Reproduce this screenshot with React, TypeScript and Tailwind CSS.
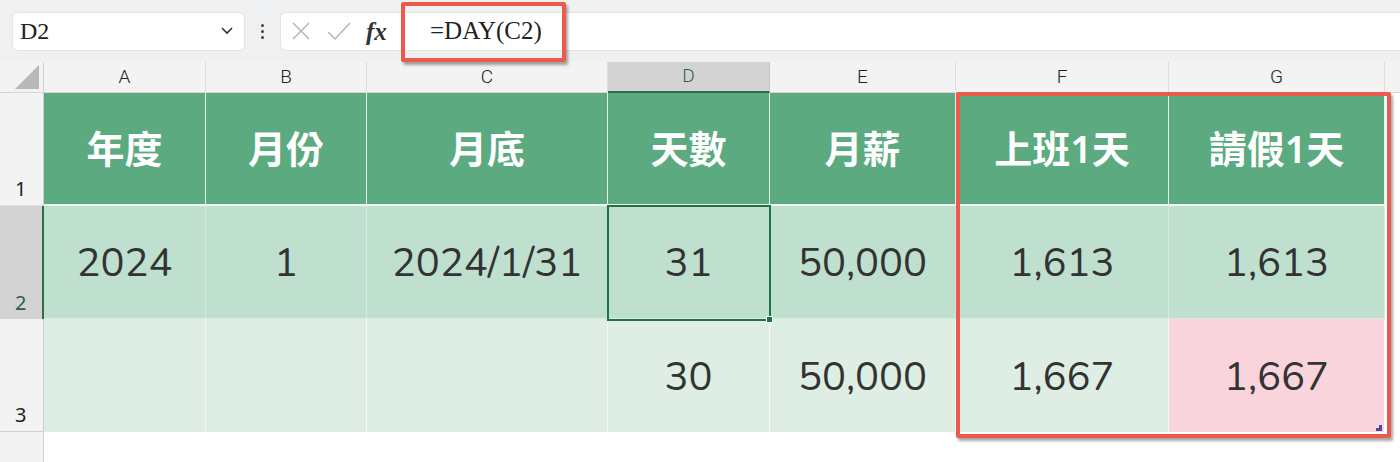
import React from "react";

const cols = [
  { k: "A", w: 162 },
  { k: "B", w: 161 },
  { k: "C", w: 241 },
  { k: "D", w: 162 },
  { k: "E", w: 186 },
  { k: "F", w: 213 },
  { k: "G", w: 216 },
];

const headers = ["年度", "月份", "月底", "天數", "月薪", "上班1天", "請假1天"];
const row2 = ["2024", "1", "2024/1/31", "31", "50,000", "1,613", "1,613"];
const row3 = ["", "", "", "30", "50,000", "1,667", "1,667"];

const numFont = { fontFamily: '"Nunito","Noto Sans","Open Sans",sans-serif' };

export default function App() {
  return (
    <div className="relative w-[1400px] h-[462px] overflow-hidden bg-white" style={{ fontFamily: '"Noto Sans","Noto Sans CJK TC",sans-serif' }}>
      {/* top bar */}
      <div className="h-[62px] bg-[#eef0f2] flex items-center pl-[12px]">
        <div className="w-[233px] h-[39px] bg-white rounded-[6px] flex items-center justify-between pl-[7px] pr-[10px] border border-[#e2e4e6]">
          <span className="text-[24px] text-[#222]" style={{ fontFamily: '"Liberation Serif",serif' }}>D2</span>
          <svg width="14" height="10" viewBox="0 0 14 10"><path d="M2 2 L7 7 L12 2" fill="none" stroke="#333" strokeWidth="1.6" /></svg>
        </div>
        <div className="w-[35px] flex flex-col items-center justify-center gap-[3px]">
          <span className="w-[3px] h-[3px] bg-[#444] rounded-full" />
          <span className="w-[3px] h-[3px] bg-[#444] rounded-full" />
          <span className="w-[3px] h-[3px] bg-[#444] rounded-full" />
        </div>
        <div className="flex-1 h-[39px] bg-white rounded-l-[6px] border border-[#e2e4e6] border-r-0 flex items-center">
          <div className="w-[120px] flex items-center pl-[9px] gap-[14px]">
            <svg width="22" height="22" viewBox="0 0 22 22"><path d="M3 3 L19 19 M19 3 L3 19" stroke="#b5b5b5" strokeWidth="1.5" /></svg>
            <svg width="26" height="22" viewBox="0 0 26 22"><path d="M2 12 L9 19 L24 3" fill="none" stroke="#b5b5b5" strokeWidth="1.5" /></svg>
            <span className="text-[25px] italic font-bold text-[#333] leading-none" style={{ fontFamily: '"Liberation Serif",serif' }}>fx</span>
          </div>
          <div className="pl-[29px] text-[25px] text-[#222]" style={{ fontFamily: '"Liberation Serif",serif' }}>=DAY(C2)</div>
        </div>
      </div>

      {/* column header row */}
      <div className="flex h-[31px] bg-[#f3f3f3]">
        <div className="w-[44px] h-full border-r border-[#cfcfcf] border-b border-b-[#d6d6d6] relative flex items-end justify-end pr-[4px] pb-[3px]">
          <svg width="24" height="24" viewBox="0 0 24 24"><path d="M24 0 L24 24 L0 24 Z" fill="#b8b8b8" /></svg>
        </div>
        {cols.map((c) => (
          <div
            key={c.k}
            style={{ width: c.w }}
            className={
              c.k === "D"
                ? "h-full flex items-center justify-center bg-[#d3d3d3] border-b-2 border-[#2e6b48] border-r border-r-[#c8c8c8] text-[19px] text-[#2e5e45]"
                : "h-full flex items-center justify-center border-r border-[#dcdcdc] border-b border-b-[#d6d6d6] text-[19px] text-[#222]"
            }
          >
            <span style={{ fontFamily: '"Liberation Sans Narrow","Roboto",sans-serif', fontWeight: 300 }}>{c.k}</span>
          </div>
        ))}
        <div className="flex-1 border-b border-[#d6d6d6]" />
      </div>

      {/* row 1 */}
      <div className="flex h-[113px]">
        <div className="w-[44px] bg-[#f3f3f3] border-r border-[#cfcfcf] border-b border-b-[#dcdcdc] flex items-end pl-[15px] pb-[1px] text-[20px] text-[#222]">1</div>
        {cols.map((c, i) => (
          <div key={c.k} style={{ width: c.w }} className="h-full bg-[#5caa7f] border-r border-[#e6f3ec] border-b-2 border-b-[#eef6f1] flex items-center justify-center text-white text-[38px] font-semibold">
            {headers[i]}
          </div>
        ))}
        <div className="flex-1" />
      </div>

      {/* row 2 */}
      <div className="flex h-[113px]">
        <div className="w-[44px] bg-[#d3d3d3] border-r-2 border-[#2e6b48] flex items-end pl-[15px] pb-[1px] text-[20px] text-[#2e5e45]">2</div>
        {cols.map((c, i) => (
          <div key={c.k} style={{ width: c.w, ...numFont }} className="h-full bg-[#bfe0cf] border-r border-[#d6ebe0] border-b border-b-[#d9ece2] flex items-center justify-center text-[#333] text-[40px] pt-[2px]">
            {row2[i]}
          </div>
        ))}
        <div className="flex-1" />
      </div>

      {/* row 3 */}
      <div className="flex h-[113px]">
        <div className="w-[44px] bg-[#f3f3f3] border-r border-[#cfcfcf] border-b border-b-[#d0d0d0] flex items-end pl-[15px] pb-[1px] text-[20px] text-[#222]">3</div>
        {cols.map((c, i) => (
          <div key={c.k} style={{ width: c.w, ...numFont }} className={(i === 6 ? "bg-[#fad4dc]" : "bg-[#deeee5]") + " h-full border-r border-[#f3f9f5] flex items-center justify-center text-[#333] text-[40px] pt-[2px]"}>
            {row3[i]}
          </div>
        ))}
        <div className="flex-1" />
      </div>

      {/* below */}
      <div className="flex h-[30px]">
        <div className="w-[44px] bg-[#f3f3f3] border-r border-[#cfcfcf]" />
      </div>

      {/* selection D2 */}
      <div className="absolute left-[607px] top-[205px] w-[164px] h-[116px] border-2 border-[#217346]" />
      <div className="absolute left-[766px] top-[316px] w-[7px] h-[7px] bg-[#217346] border border-white" />

      {/* resize handle marker */}
      <div className="absolute left-[1376px] top-[425px] w-[6px] h-[6px] bg-[#4a4f9a]" style={{ clipPath: "polygon(100% 0,100% 100%,0 100%,0 50%,50% 50%,50% 0)" }} />

      {/* red boxes */}
      <div className="absolute left-[401px] top-[2px] w-[165px] h-[60px] border-[4px] border-[#eb5a4c] rounded-[2px] shadow-[2px_3px_3px_rgba(0,0,0,0.35)]" />
      <div className="absolute left-[956px] top-[92px] w-[435px] h-[346px] border-[4px] border-[#eb5a4c] rounded-[2px] shadow-[2px_3px_3px_rgba(0,0,0,0.35)]" />
    </div>
  );
}
